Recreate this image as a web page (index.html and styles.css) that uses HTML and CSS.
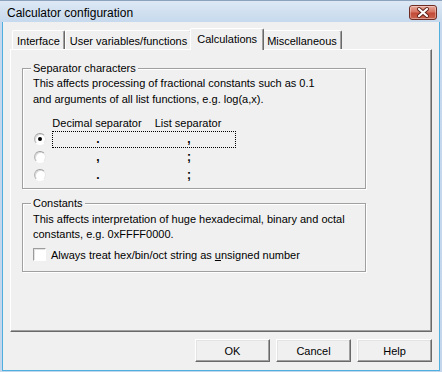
FILE: index.html
```html
<!DOCTYPE html>
<html lang="en">

<head>
    <meta charset="UTF-8">
    <title>Calculator configuration</title>
    <link rel="stylesheet" href="styles.css">
</head>

<body>
    <div class="window">
        <div class="titlebar">
            <span class="title">Calculator configuration</span>
            <span class="close">
                <svg width="26" height="13" viewBox="0 0 26 13">
                    <path d="M9 3 L17 10 M17 3 L9 10" stroke="#5a2019" stroke-width="4" stroke-linecap="round" />
                    <path d="M9 3 L17 10 M17 3 L9 10" stroke="#fff" stroke-width="2.2" stroke-linecap="round" />
                </svg>
            </span>
        </div>
        <div class="client">
            <div class="tabs">
                <div class="tab">Interface</div>
                <div class="tab">User variables/functions</div>
                <div class="tab tab--active">Calculations</div>
                <div class="tab">Miscellaneous</div>
            </div>
            <div class="panel">
                <fieldset class="group group--sep">
                    <legend>Separator characters</legend>
                    <p class="desc">This affects processing of fractional constants such as 0.1<br>and arguments of all
                        list functions, e.g. log(a,x).</p>
                    <div class="sep__head"><span>Decimal separator</span><span>List separator</span></div>
                    <div class="sep__row">
                        <span class="radio radio--on"></span>
                        <div class="sep__box sep__box--focus"><span>.</span><span>,</span></div>
                    </div>
                    <div class="sep__row">
                        <span class="radio"></span>
                        <div class="sep__box"><span>,</span><span>;</span></div>
                    </div>
                    <div class="sep__row">
                        <span class="radio"></span>
                        <div class="sep__box"><span>.</span><span>;</span></div>
                    </div>
                </fieldset>
                <fieldset class="group group--const">
                    <legend>Constants</legend>
                    <p class="desc">This affects interpretation of huge hexadecimal, binary and octal<br>constants, e.g.
                        0xFFFF0000.</p>
                    <label class="check"><span class="check__box"></span><span>Always treat hex/bin/oct string as
                            <u>u</u>nsigned number</span></label>
                </fieldset>
            </div>
            <div class="buttons">
                <button>OK</button><button>Cancel</button><button>Help</button>
            </div>
        </div>
    </div>
</body>

</html>
```
FILE: styles.css
```css
* {
    margin: 0;
    padding: 0;
    box-sizing: border-box;
}

body {
    width: 442px;
    height: 372px;
    overflow: hidden;
    font-family: "Liberation Sans", Arial, sans-serif;
    font-size: 11px;
    color: #000;
    background: #c6d9ee;
}

.window {
    height: 372px;
    display: flex;
    flex-direction: column;
    background: linear-gradient(to bottom, #dde8f4 0px, #c5d8ed 22px, #c3d6ec 100%);
    border-top: 1px solid #8da2bd;
}

.titlebar {
    height: 21px;
    display: flex;
    align-items: center;
    justify-content: space-between;
    padding: 0 5px 0 7px;
}

.title {
    font-size: 12px;
    padding-top: 2px;
}

.close {
    width: 28px;
    height: 15px;
    margin-top: 2px;
    border: 1px solid #6e2c23;
    border-radius: 3px;
    background: linear-gradient(to bottom, #e8a899 0%, #d77563 45%, #c24a37 55%, #c9634f 100%);
    box-shadow: inset 0 0 0 1px rgba(255, 255, 255, .35);
    display: flex;
    align-items: center;
    justify-content: center;
}

.client {
    flex: 1;
    margin: 0 2px 1px;
    border: 1px solid #4fb0e0;
    border-top: none;
    background: #f0f0f0;
    display: flex;
    flex-direction: column;
    padding: 6px 7px 8px;
}

/* tabs */

.tabs {
    height: 21px;
    display: flex;
    align-items: flex-end;
    padding-left: 2px;
}

.tab {
    height: 19px;
    padding: 2px 4px 0;
    line-height: 16px;
    white-space: nowrap;
    border: 1px solid;
    border-color: #fff #696969 transparent #fff;
    border-bottom: none;
    border-radius: 2px 2px 0 0;
    box-shadow: inset -1px 0 #a0a0a0;
    background: #f0f0f0;
}

.tab--active {
    position: relative;
    z-index: 1;
    height: 22px;
    margin: 0 -2px -1px;
    padding: 2px 6px 0;
}

.panel {
    height: 283px;
    border: 1px solid;
    border-color: #fff #696969 #696969 #fff;
    box-shadow: inset -1px -1px #a0a0a0;
    padding: 12px 11px 0;
}

/* group boxes */

.group {
    width: 344px;
    border: 1px solid #a0a0a0;
    box-shadow: inset 1px 1px #fff, 1px 1px #fff;
    padding: 0 10px 4px;
    min-width: 0;
}

.group legend {
    margin-left: -2px;
    padding: 0 2px;
    line-height: 13px;
    background: #f0f0f0;
}

.desc {
    line-height: 16px;
}

.sep__head {
    display: grid;
    grid-template-columns: 90px 92px;
    margin: 10px 0 0 19px;
    line-height: 13px;
    text-align: center;
    white-space: nowrap;
}

.sep__row {
    height: 18px;
    display: flex;
    align-items: center;
}

.radio {
    width: 12px;
    height: 12px;
    margin-left: 1px;
    border-radius: 50%;
    border: 1px solid;
    border-color: #9c9c9c #e6e6e6 #fff #b4b4b4;
    box-shadow: inset 1px 1px #dcdcdc;
    background: #fff;
    display: flex;
    align-items: center;
    justify-content: center;
}

.radio--on::after {
    content: "";
    width: 4px;
    height: 4px;
    border-radius: 50%;
    background: #000;
}

.sep__box {
    width: 184px;
    height: 17px;
    margin-left: 6px;
    display: grid;
    grid-template-columns: 90px 92px;
    text-align: center;
    font-size: 12px;
    font-weight: bold;
    line-height: 15px;
    border: 1px dotted transparent;
}

.sep__box--focus {
    border-color: #000;
}

.group--const {
    margin-top: 8px;
    padding: 2px 10px 10px;
}

.group--const .desc {
    line-height: 15px;
}

.check {
    display: flex;
    align-items: center;
    gap: 5px;
    margin-top: 6px;
    height: 13px;
}

.check__box {
    width: 13px;
    height: 13px;
    border: 1px solid;
    border-color: #9c9c9c #fff #fff #9c9c9c;
    box-shadow: inset 1px 1px #e2e2e2;
    background: #fff;
}

/* buttons */

.buttons {
    display: flex;
    justify-content: flex-end;
    gap: 6px;
    margin-top: 7px;
}

button {
    width: 75px;
    height: 23px;
    font-family: inherit;
    font-size: 11px;
    color: #000;
    background: #f0f0f0;
    border: 1px solid;
    border-color: #fff #696969 #696969 #fff;
    box-shadow: inset -1px -1px #a0a0a0, inset 1px 1px #e3e3e3;
}
```
